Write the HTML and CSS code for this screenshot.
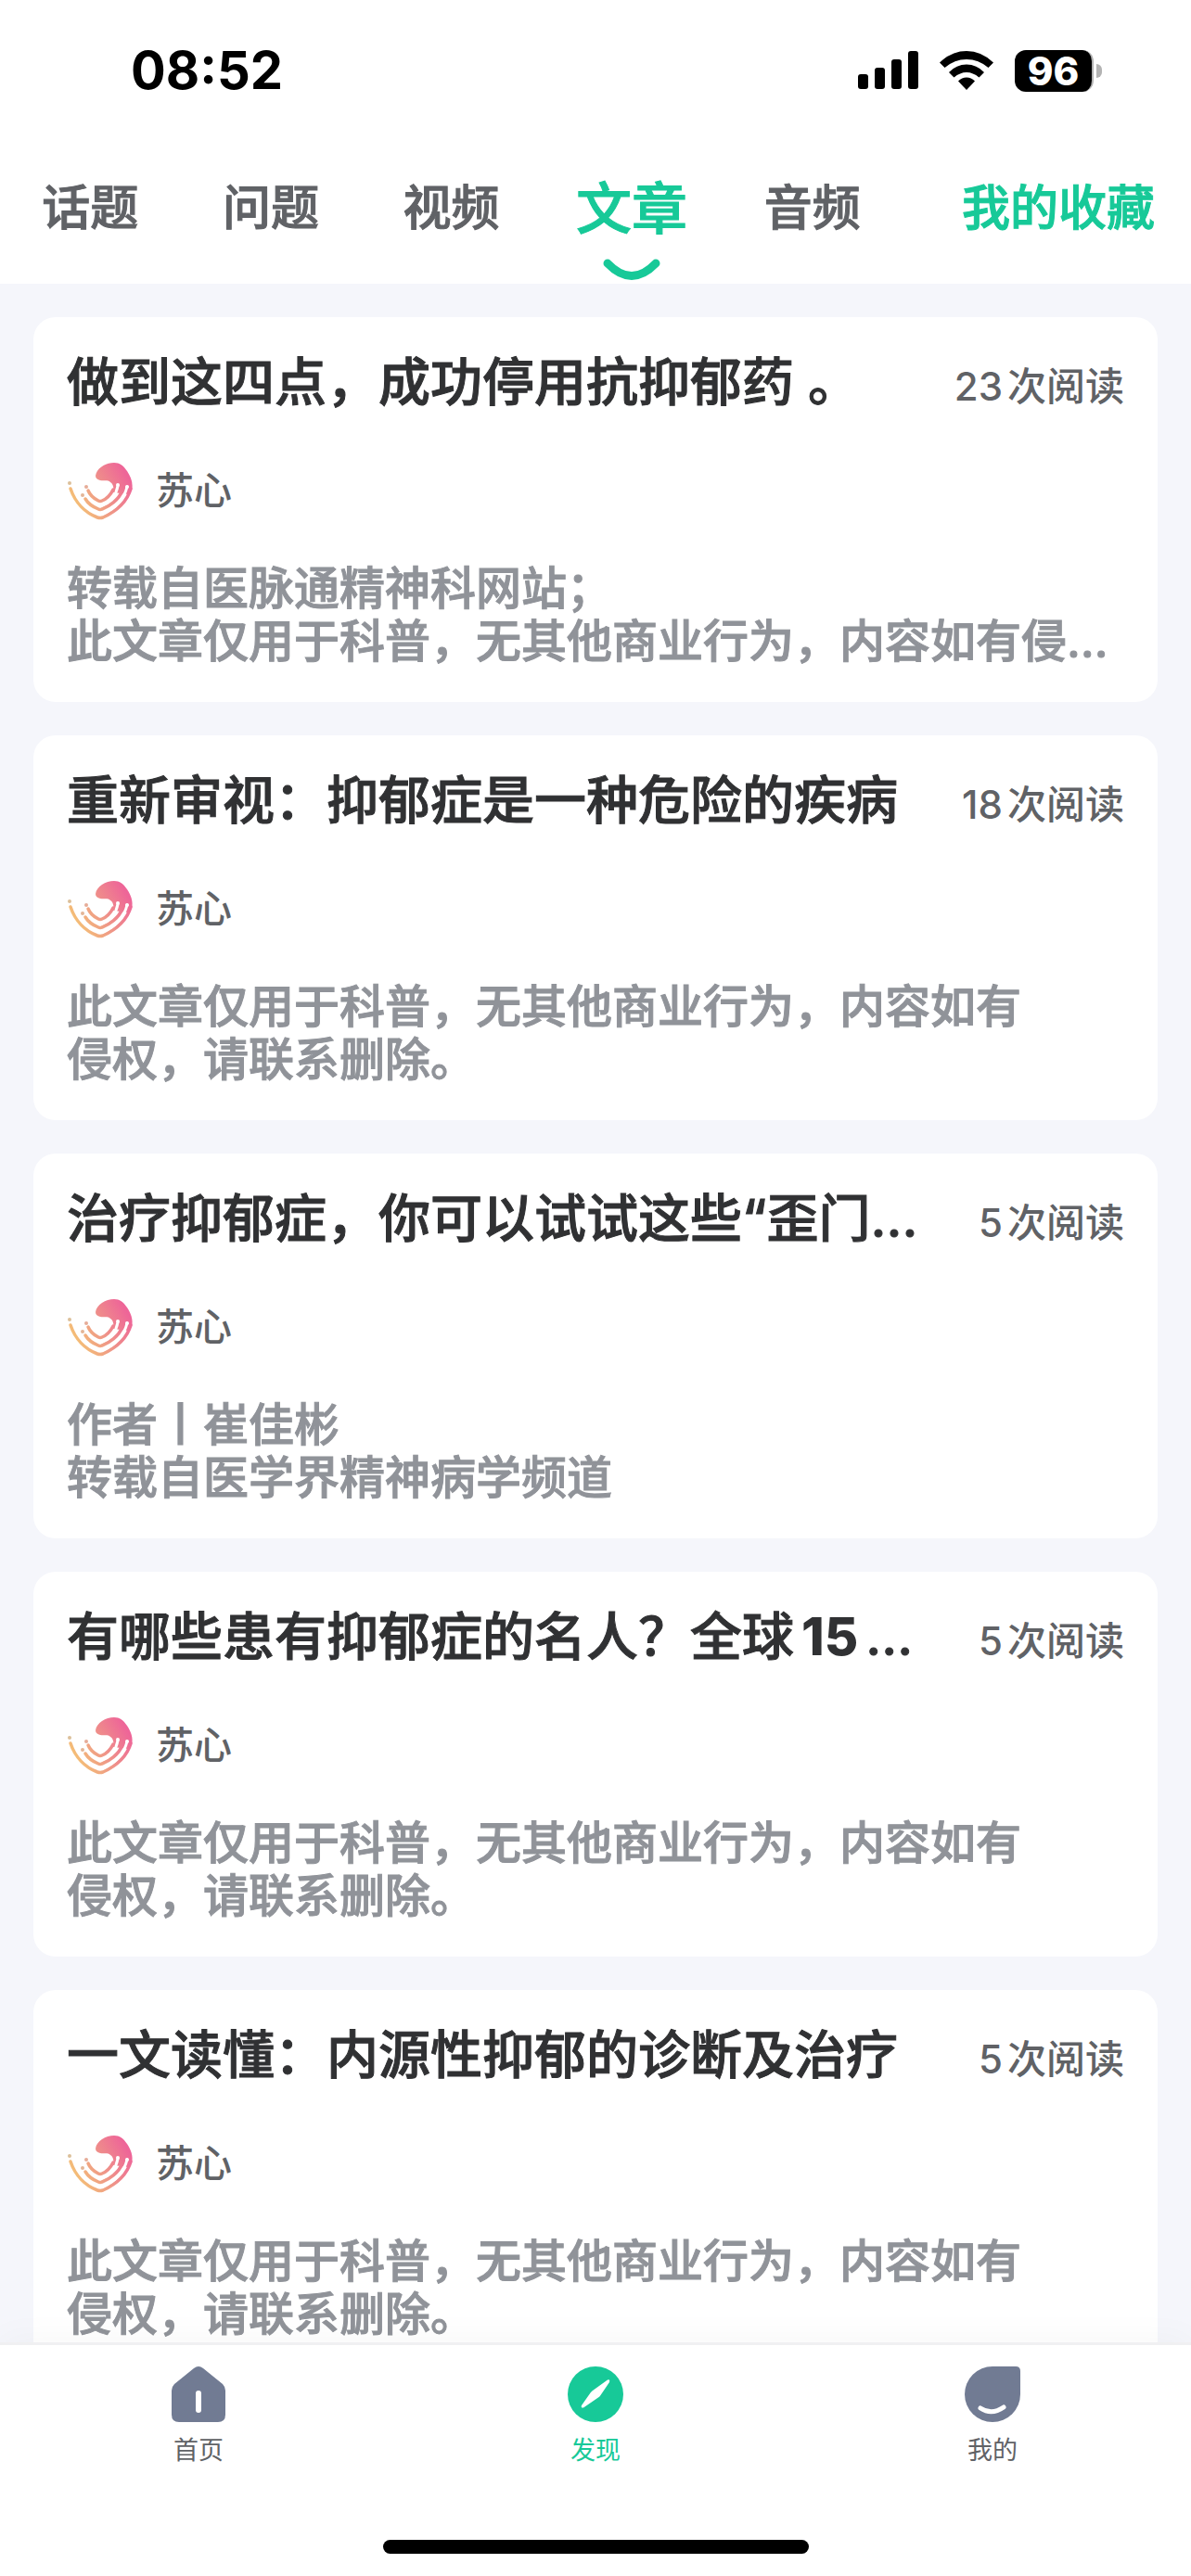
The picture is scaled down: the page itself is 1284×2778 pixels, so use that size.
FILE: index.html
```html
<!DOCTYPE html>
<html lang="zh-CN">
<head>
    <meta charset="UTF-8">
    <meta name="viewport" content="width=device-width, initial-scale=1.0">
    <title>发现 - 文章</title>
    <link rel="stylesheet" href="styles.css">
</head>
<body>

<!-- 头像图形，列表里重复使用 -->
<svg class="defs" width="0" height="0" aria-hidden="true">
    <defs>
        <linearGradient id="heart" gradientUnits="userSpaceOnUse" x1="6" y1="52" x2="64" y2="18">
            <stop offset="0" stop-color="#f5c474"/>
            <stop offset="0.45" stop-color="#ef9a86"/>
            <stop offset="1" stop-color="#ee6598"/>
        </linearGradient>
    </defs>
    <symbol id="avatar" viewBox="0 0 72 72">
        <path fill="url(#heart)" d="M31 20C32 12 42 6 51 6C57 6 61 9 65 15C69 21 72 28 70 36L66 40L50 38C51 33 50 29 47 27C44 24 40 26 36 25C33 24 31 23 31 20Z"/>
        <g fill="none" stroke="url(#heart)" stroke-width="3.5" stroke-linecap="round" stroke-linejoin="round">
            <path d="M23 36C25 41 30 45 34 47Q36 48 38 47C43 45 47 41 50 35"/>
            <path d="M20 45C23 50 29 54 34 56Q36 57 38 56C46 53 56 46 60 36"/>
            <path d="M4 34C9 49 20 60 33 65Q36 66 39 65C54 58 65 48 69 34"/>
        </g>
        <g fill="none" stroke="#fff" stroke-width="3" stroke-linecap="round">
            <path d="M55 31C53 42 46 49 38 52"/>
            <path d="M65 32C62 45 52 56 39 61"/>
        </g>
        <circle cx="55" cy="30" r="2" fill="#fff"/>
        <circle cx="65" cy="32" r="2" fill="#fff"/>
        <circle cx="3" cy="28" r="2" fill="#dcc09a"/>
        <circle cx="21" cy="32" r="2" fill="#e6ac98"/>
        <circle cx="17" cy="41" r="2" fill="#e3b596"/>
    </symbol>
</svg>

<header>
    <div class="status">
        <span class="time">08:52</span>
        <div class="status-icons">
            <svg width="65" height="42" viewBox="0 0 65 42">
                <rect x="0" y="25" width="11" height="16" rx="3"/>
                <rect x="18" y="18" width="11" height="23" rx="3"/>
                <rect x="36" y="9" width="11" height="32" rx="3"/>
                <rect x="54" y="0" width="11" height="41" rx="3"/>
            </svg>
            <svg width="58" height="42" viewBox="0 0 58 42">
                <path d="M0 12.5Q13 0 29 0T58 12.5L52.500 18Q42 9 29 9T5.500 18Z"/>
                <path d="M10 23Q18 14.500 29 14.500T48 23L42.500 28.500Q36 23 29 23T15.500 28.500Z"/>
                <path d="M20 32.500Q24 28.500 29 28.500T38 32.500L29 42Z"/>
            </svg>
            <div class="battery">
                <span class="battery-level">96</span>
                <span class="battery-tip"></span>
            </div>
        </div>
    </div>
    <div class="tabs">
        <nav>
            <a href="#">话题</a>
            <a href="#">问题</a>
            <a href="#">视频</a>
            <a href="#" class="active">文章
                <svg class="smile" width="62" height="23" viewBox="0 0 62 23">
                    <path d="M5 5Q31 32 57 5" fill="none" stroke="#17c998" stroke-width="9" stroke-linecap="round"/>
                </svg>
            </a>
            <a href="#">音频</a>
        </nav>
        <a href="#" class="favorites">我的收藏</a>
    </div>
</header>

<main>
    <article class="card">
        <div class="card-top">
            <h2>做到这四点，成功停用抗抑郁药 。</h2>
            <span class="reads"><span>23</span><span>次阅读</span></span>
        </div>
        <div class="author"><svg><use href="#avatar"/></svg><span>苏心</span></div>
        <p>转载自医脉通精神科网站；<br>此文章仅用于科普，无其他商业行为，内容如有侵…</p>
    </article>

    <article class="card">
        <div class="card-top">
            <h2>重新审视：抑郁症是一种危险的疾病</h2>
            <span class="reads"><span>18</span><span>次阅读</span></span>
        </div>
        <div class="author"><svg><use href="#avatar"/></svg><span>苏心</span></div>
        <p>此文章仅用于科普，无其他商业行为，内容如有<br>侵权，请联系删除。</p>
    </article>

    <article class="card">
        <div class="card-top">
            <h2>治疗抑郁症，你可以试试这些“歪门…</h2>
            <span class="reads"><span>5</span><span>次阅读</span></span>
        </div>
        <div class="author"><svg><use href="#avatar"/></svg><span>苏心</span></div>
        <p>作者丨崔佳彬<br>转载自医学界精神病学频道</p>
    </article>

    <article class="card">
        <div class="card-top">
            <h2>有哪些患有抑郁症的名人？全球<b>15</b>…</h2>
            <span class="reads"><span>5</span><span>次阅读</span></span>
        </div>
        <div class="author"><svg><use href="#avatar"/></svg><span>苏心</span></div>
        <p>此文章仅用于科普，无其他商业行为，内容如有<br>侵权，请联系删除。</p>
    </article>

    <article class="card">
        <div class="card-top">
            <h2>一文读懂：内源性抑郁的诊断及治疗</h2>
            <span class="reads"><span>5</span><span>次阅读</span></span>
        </div>
        <div class="author"><svg><use href="#avatar"/></svg><span>苏心</span></div>
        <p>此文章仅用于科普，无其他商业行为，内容如有<br>侵权，请联系删除。</p>
    </article>
</main>

<footer>
    <nav class="tabbar">
        <a href="#">
            <svg width="60" height="62" viewBox="0 0 60 62">
                <path fill="#717b93" d="M25 3Q30 -1 35 3L56 20Q59 23 59 27V53Q59 61 51 61H9Q1 61 1 53V27Q1 23 4 20Z"/>
                <rect x="27" y="27" width="6" height="24" rx="3" fill="#fff"/>
            </svg>
            <span>首页</span>
        </a>
        <a href="#" class="active">
            <svg width="60" height="62" viewBox="0 0 60 62">
                <circle cx="30" cy="31" r="30" fill="#17c998"/>
                <path fill="#fff" d="M43 15.500Q46 14.500 45 18L35.500 32Q34.500 33.500 33 34.500L17 45.500Q14 46 15 43L24.500 29.500Q25.500 28 27 27Z"/>
            </svg>
            <span>发现</span>
        </a>
        <a href="#">
            <svg width="60" height="62" viewBox="0 0 60 62">
                <path fill="#717b93" d="M30 1H55Q60 1 60 6V31A30 30 0 1 1 30 1Z"/>
                <path d="M17 46Q29 54 42 45" fill="none" stroke="#fff" stroke-width="5" stroke-linecap="round"/>
            </svg>
            <span>我的</span>
        </a>
    </nav>
    <div class="home-indicator"></div>
</footer>

</body>
</html>
```
FILE: styles.css
```css
* {
    box-sizing: border-box;
}
body {
    margin: 0;
    height: 100vh;
    display: flex;
    flex-direction: column;
    overflow: hidden;
    font-family: Inter, "Noto Sans CJK SC", sans-serif;
    font-weight: 500;
    background-color: #f5f6fb;
    color: #303133;
}
a {
    color: #606266;
    text-decoration: none;
}
svg {
    display: block;
}
.defs {
    position: absolute;
}

/* 顶部 */
header {
    flex: none;
    background-color: #fff;
}
.status {
    display: flex;
    align-items: center;
    justify-content: space-between;
    height: 152px;
    padding: 0 96px 0 141px;
    color: #000;
}
.time {
    font-size: 56px;
    font-weight: 700;
}
.status-icons {
    display: flex;
    align-items: center;
    gap: 23px;
}
.battery {
    display: flex;
    align-items: center;
    gap: 3px;
}
.battery-level {
    width: 85px;
    height: 45px;
    border-right: 2px solid #b3b3b3;
    border-radius: 12px;
    background-color: #000;
    color: #fff;
    font-size: 42px;
    font-weight: 800;
    line-height: 45px;
    text-align: center;
}
.battery-tip {
    width: 6px;
    height: 15px;
    border-radius: 0 6px 6px 0;
    background-color: #b3b3b3;
}
.tabs {
    display: flex;
    align-items: center;
    height: 154px;
    font-size: 52px;
    line-height: 72px;
    -webkit-text-stroke: 1px;
}
.tabs nav {
    flex: 1;
    display: flex;
}
.tabs nav a {
    flex: 1;
    display: flex;
    align-items: center;
    justify-content: center;
    position: relative;
    height: 154px;
    padding-bottom: 8px;
}
.tabs nav a.active {
    color: #17c998;
    font-size: 60px;
}
.smile {
    position: absolute;
    left: 50%;
    bottom: 4px;
    margin-left: -31px;
}
.favorites {
    padding: 0 39px 8px 64px;
    color: #17c998;
}

/* 文章列表 */
main {
    flex: 1;
    min-height: 0;
    overflow: hidden;
    display: flex;
    flex-direction: column;
    gap: 36px;
    padding: 36px;
}
.card {
    flex: none;
    padding: 36px 36px 37px;
    border-radius: 24px;
    background-color: #fff;
}
.card-top {
    display: flex;
    align-items: baseline;
    gap: 36px;
}
.card h2 {
    flex: 1;
    min-width: 0;
    margin: 0;
    overflow: hidden;
    white-space: nowrap;
    font-size: 56px;
    font-weight: 500;
    line-height: 68px;
    -webkit-text-stroke: 1px;
}
.card h2 b {
    margin: 0 8px;
    font-weight: 800;
    -webkit-text-stroke: 0;
}
.reads {
    display: flex;
    gap: 5px;
    font-size: 42px;
    line-height: 60px;
    color: #606266;
}
.author {
    display: flex;
    align-items: center;
    gap: 24px;
    margin: 46px 0 41px;
    font-size: 41px;
    line-height: 60px;
    color: #606266;
}
.author svg {
    width: 72px;
    height: 72px;
}
.card p {
    margin: 0;
    font-size: 49px;
    line-height: 57px;
    color: #909399;
    -webkit-text-stroke: 1px;
}

/* 底部导航 */
footer {
    flex: none;
    position: relative;
    height: 252px;
    padding-top: 22px;
    border-top: 3px solid #f0f0f2;
    background-color: #fff;
    box-shadow: 0 0 40px rgba(0, 0, 0, 0.04);
}
.tabbar {
    display: flex;
}
.tabbar a {
    flex: 1;
    display: flex;
    flex-direction: column;
    align-items: center;
    gap: 10px;
    font-size: 27px;
    font-weight: 400;
    line-height: 40px;
}
.tabbar a.active {
    color: #17c998;
}
.home-indicator {
    width: 459px;
    height: 15px;
    margin: 76px auto 0;
    border-radius: 8px;
    background-color: #000;
}
```
